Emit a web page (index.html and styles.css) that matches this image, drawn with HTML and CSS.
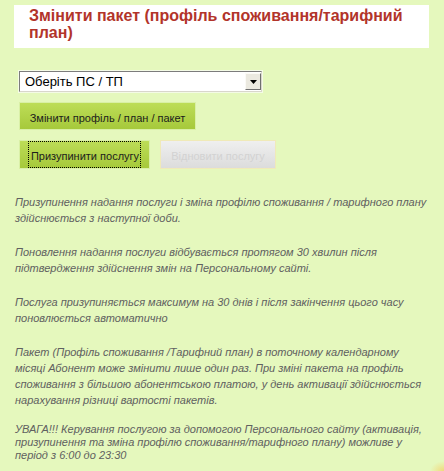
FILE: index.html
```html
<!DOCTYPE html>
<html lang="uk">
<head>
<meta charset="utf-8">
<title>Змінити пакет</title>
<link rel="stylesheet" href="styles.css">
</head>
<body>
<div class="page">
  <h1 class="title">Змінити пакет (профіль споживання/тарифний план)</h1>

  <form class="controls">
    <div class="select-wrap">
      <select class="select">
        <option>Оберіть ПС / ТП</option>
      </select>
      <span class="select-arrow"><svg width="7" height="4" viewBox="0 0 7 4"><path d="M0 0H7L3.5 4Z" fill="#000"/></svg></span>
    </div>

    <div class="row">
      <button type="button" class="btn btn-change">Змінити профіль / план / пакет</button>
    </div>

    <div class="row">
      <button type="button" class="btn btn-pause"><span class="focus">Призупинити послугу</span></button>
      <button type="button" class="btn btn-resume" disabled>Відновити послугу</button>
    </div>
  </form>

  <div class="notes">
    <p class="note">Призупинення надання послуги і зміна профілю споживання / тарифного плану здійснюється з наступної доби.</p>
    <p class="note">Поновлення надання послуги відбувається протягом 30 хвилин після підтвердження здійснення змін на Персональному сайті.</p>
    <p class="note">Послуга призупиняється максимум на 30 днів і після закінчення цього часу поновлюється автоматично</p>
    <p class="note note-pack">Пакет (Профіль споживання /Тарифний план) в поточному календарному місяці Абонент може змінити лише один раз. При зміні пакета на профіль споживання з більшою абонентською платою, у день активації здійснюється нарахування різниці вартості пакетів.</p>
    <p class="note note-warn">УВАГА!!! Керування послугою за допомогою Персонального сайту (активація, призупинення та зміна профілю споживання/тарифного плану) можливе у період з 6:00 до 23:30</p>
  </div>
</div>
</body>
</html>
```

FILE: styles.css
```css
html, body {
  margin: 0;
  padding: 0;
  height: 100%;
}

body {
  background-color: #e5f8bd;
  background-image: radial-gradient(ellipse 14px 10px at 100% 100%, #f1d97a 0, rgba(241, 217, 122, 0) 100%);
  font-family: "Liberation Sans", Arial, sans-serif;
  overflow: hidden;
}

.page {
  padding: 5px 0 0 14px;
}

.title {
  width: 400px;
  margin: 0;
  padding: 2px 0 7px 15px;
  background: #ffffff;
  color: #b2342a;
  font-size: 16px;
  font-weight: bold;
  line-height: 17px;
}

.controls {
  margin: 23px 0 0 5px;
  display: flex;
  flex-direction: column;
  gap: 10px;
}

.select-wrap {
  position: relative;
  width: 243px;
  height: 21px;
  box-sizing: border-box;
  border-style: solid;
  border-width: 1px;
  border-color: #7c7c7c #d9d6cc #d9d6cc #7c7c7c;
  background: #ffffff;
  box-shadow: 0 0 0 1px #f4fbe6;
}

.select {
  appearance: none;
  -webkit-appearance: none;
  display: block;
  width: 100%;
  height: 100%;
  margin: 0;
  padding: 0 20px 0 5px;
  border: 0;
  background: transparent;
  font-family: "Liberation Sans", Arial, sans-serif;
  font-size: 13px;
  color: #000;
  outline: none;
}

.select-arrow {
  position: absolute;
  top: 1px;
  right: 0;
  width: 16px;
  height: 17px;
  box-sizing: border-box;
  border-style: solid;
  border-width: 1px;
  border-color: #fbfaf6 #6f6f6f #6f6f6f #fbfaf6;
  background: #ebe9e0;
  display: flex;
  align-items: center;
  justify-content: center;
  pointer-events: none;
}

.row {
  display: flex;
  gap: 10px;
}

.btn {
  box-sizing: border-box;
  margin: 0;
  font-family: "Liberation Sans", Arial, sans-serif;
  font-size: 11px;
  line-height: 13px;
  color: #1c1c1c;
  border: 1px solid #d9f0a6;
  background: linear-gradient(#bddd57, #a6c93b);
  display: flex;
  align-items: center;
  justify-content: center;
}

.btn-change {
  width: 177px;
  height: 28px;
  padding: 4px 0 0;
}

.btn-pause {
  width: 131px;
  height: 29px;
  padding: 0;
  align-items: stretch;
}

.focus {
  display: flex;
  align-items: center;
  padding: 3px 1px 0 2px;
  border: 1px dotted #000;
}

.btn-resume {
  width: 116px;
  height: 29px;
  padding: 4px 0 0;
  border-color: #f0eab8;
  background: linear-gradient(#efefef, #dcdcdc);
  color: #d2d2d2;
}

.notes {
  width: 414px;
  margin: 25px 0 0 1px;
  color: #606060;
  font-size: 11px;
  font-style: italic;
}

.note {
  margin: 0 0 18px;
  line-height: 16px;
}

.note-pack {
  margin-bottom: 15px;
}

.note-warn {
  margin: 0;
  line-height: 13px;
}
```
